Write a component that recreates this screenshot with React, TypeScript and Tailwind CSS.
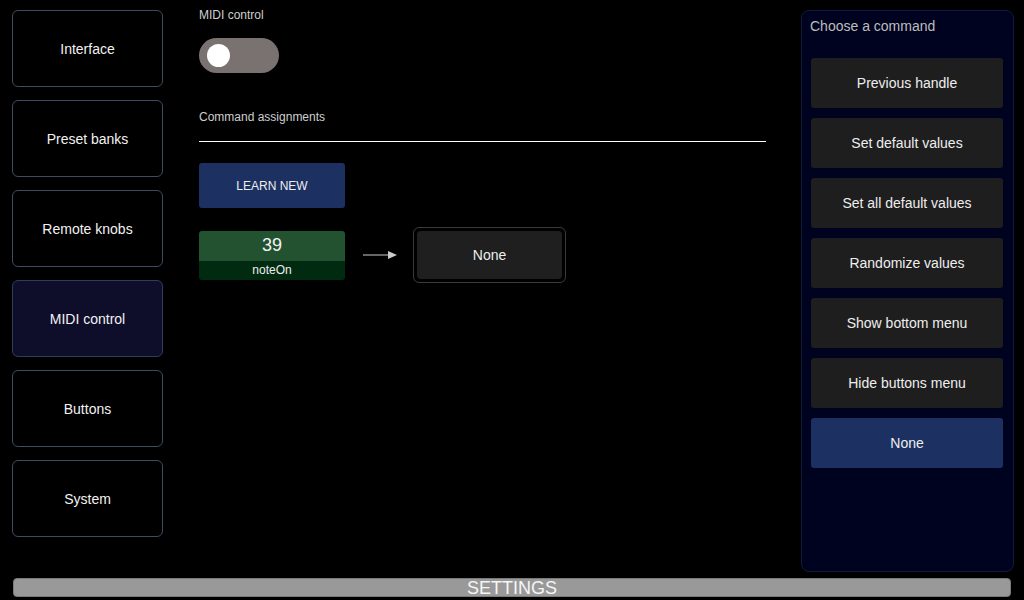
const sections = ["Interface", "Preset banks", "Remote knobs", "MIDI control", "Buttons", "System"];
const commands = [
  "Previous handle",
  "Set default values",
  "Set all default values",
  "Randomize values",
  "Show bottom menu",
  "Hide buttons menu",
  "None",
];

function SideButton({ label, active }: { label: string; active: boolean }) {
  return (
    <button
      className={
        active
          ? "h-[77px] w-[151px] rounded-[6px] border border-[#2e3d5e] bg-[#0e0e2b] pt-[2px] text-[14px] text-[#f2f2f2]"
          : "h-[77px] w-[151px] rounded-[6px] border border-[#3e4b60] bg-black pt-[2px] text-[14px] text-[#f2f2f2]"
      }
    >
      {label}
    </button>
  );
}

function Toggle() {
  return (
    <div className="mt-[15px] flex h-[35px] w-[80px] items-center rounded-full bg-[#7a7270] pl-[8px]">
      <div className="h-[23px] w-[23px] rounded-full bg-white" />
    </div>
  );
}

function Arrow() {
  return (
    <svg width="35" height="12" viewBox="0 0 35 12" className="ml-[18px] mr-[15px]">
      <line x1="0" y1="6" x2="26" y2="6" stroke="#cccccc" strokeWidth="1" />
      <polygon points="25,2 34,6 25,10" fill="#cccccc" />
    </svg>
  );
}

export default function App() {
  return (
    <div
      className="flex h-[600px] w-[1024px] flex-col bg-black"
      style={{ fontFamily: '"Liberation Sans", Arial, sans-serif' }}
    >
      <div className="flex h-[578px] items-start">
        <div className="ml-[12px] mt-[10px] flex flex-col gap-[13px]">
          {sections.map((s) => (
            <SideButton key={s} label={s} active={s === "MIDI control"} />
          ))}
        </div>

        <div className="ml-[36px] mt-[7px] flex w-[567px] flex-col">
          <div className="text-[12px] leading-[16px] text-[#cfcfcf]">MIDI control</div>
          <Toggle />
          <div className="mt-[36px] text-[12px] leading-[16px] text-[#cfcfcf]">Command assignments</div>
          <div className="mt-[16px] h-px w-full bg-white" />
          <button className="mt-[21px] h-[45px] w-[146px] rounded-[3px] bg-[#1c3062] text-[12px] text-[#eeeeee]">
            LEARN NEW
          </button>
          <div className="mt-[19px] flex items-center">
            <div className="flex w-[146px] flex-col overflow-hidden rounded-[3px]">
              <div className="flex h-[30px] items-center justify-center bg-[#22522f] text-[18px] text-[#f2f2f2]">
                39
              </div>
              <div className="flex h-[19px] items-center justify-center bg-[#002b10] text-[12px] text-[#eeeeee]">
                noteOn
              </div>
            </div>
            <Arrow />
            <div className="h-[56px] w-[153px] rounded-[6px] border border-[#3a3a3a] p-[3px]">
              <div className="flex h-full w-full items-center justify-center rounded-[4px] bg-[#1f1f1f] text-[14px] text-[#eeeeee]">
                None
              </div>
            </div>
          </div>
        </div>

        <div className="ml-[35px] mt-[10px] flex h-[562px] w-[213px] flex-col rounded-[8px] border border-[#111a3d] bg-[#000320] pl-[8px] pt-[5px]">
          <div className="text-[14px] leading-[20px] text-[#bdbdbd]">Choose a command</div>
          <div className="ml-[1px] mt-[22px] flex flex-col gap-[10px]">
            {commands.map((c) => (
              <button
                key={c}
                className={
                  c === "None"
                    ? "h-[50px] w-[192px] rounded-[3px] bg-[#1c3062] text-[14px] text-[#eeeeee]"
                    : "h-[50px] w-[192px] rounded-[3px] bg-[#1e1e1e] text-[14px] text-[#eeeeee]"
                }
              >
                {c}
              </button>
            ))}
          </div>
        </div>
      </div>

      <div className="mx-[13px] flex h-[19px] items-center justify-center rounded-[4px] border border-[#7a7a7a] bg-[#999999] pt-[2px] text-[18px] leading-[19px] text-[#f5f5f5]">
        SETTINGS
      </div>
    </div>
  );
}
